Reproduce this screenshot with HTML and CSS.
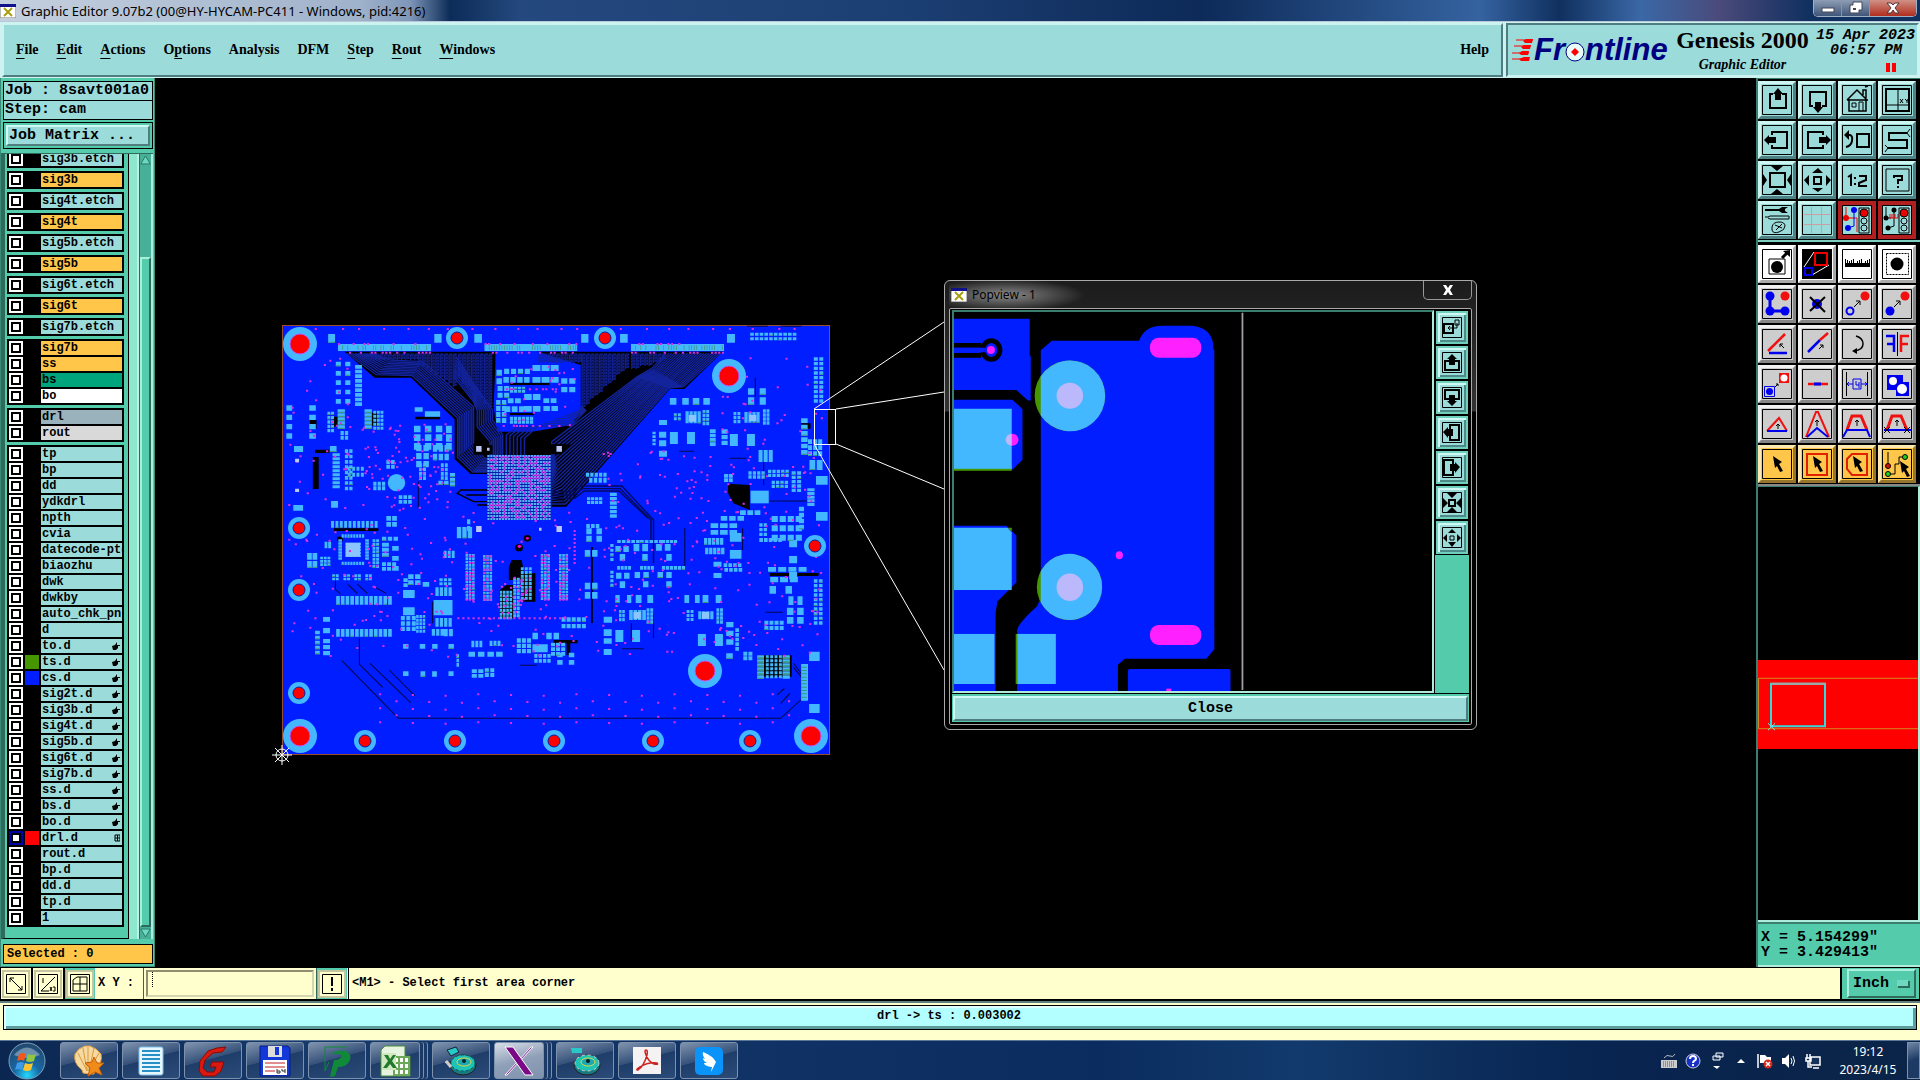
FILE: index.html
```html
<!DOCTYPE html>
<html lang="en">
<head>
  <meta charset="UTF-8">
  <meta name="viewport" content="width=device-width, initial-scale=1.0">
  <title>Graphic Editor 9.07b2</title>
  <link rel="stylesheet" href="styles.css">
</head>
<body>

  <header class="titlebar">
    <svg class="app-icon" viewBox="0 0 16 14"><rect width="16" height="14" fill="#fff" stroke="#777"/><rect width="16" height="3" fill="#11118c"/><path d="M4 4l8 8M12 4l-8 8" stroke="#a8a010" stroke-width="2"/></svg>
    <span class="title-text">Graphic Editor 9.07b2 (00@HY-HYCAM-PC411 - Windows, pid:4216)</span>
    <div class="win-controls">
      <button class="win-btn" aria-label="Minimize"><svg viewBox="0 0 20 16"><rect x="4" y="8" width="12" height="4" fill="#fff" stroke="#445"/></svg></button>
      <button class="win-btn" aria-label="Restore"><svg viewBox="0 0 20 16"><path d="M7 2h9v8h-3v3H4V5h3z" fill="#fff" stroke="#445"/><path d="M7 8h3v2H7z" fill="#445"/></svg></button>
      <button class="win-btn win-close" aria-label="Close window"><svg viewBox="0 0 20 16"><path d="M4 3h4l2 2 2-2h4l-4 5 4 5h-4l-2-3-2 3H4l4-5z" fill="#fff" stroke="#533"/></svg></button>
    </div>
  </header>

  <div class="topbar">
    <nav class="menu">
      <a href="#"><u>F</u>ile</a>
      <a href="#"><u>E</u>dit</a>
      <a href="#"><u>A</u>ctions</a>
      <a href="#">O<u>p</u>tions</a>
      <a href="#">Analysis</a>
      <a href="#">DFM</a>
      <a href="#"><u>S</u>tep</a>
      <a href="#"><u>R</u>out</a>
      <a href="#"><u>W</u>indows</a>
      <a href="#" class="help">Help</a>
    </nav>
    <div class="brand">
      <div class="logo">
        <svg viewBox="0 0 22 26"><path d="M14 2h7l-1 4h-7l-2-2zM12 8h7l-1 4h-7l-2-2zM10 14h7l-1 4H9l-2-2zM12 20h6l-1 4H9l-2-2z" fill="#f00"/><path d="M4 3h17M2 9h17M0 16h17M0 22h17" stroke="#f00"/></svg>
        <span>Fr<svg class="target" viewBox="0 0 20 22"><circle cx="10" cy="11" r="9" fill="#e8fbfb" stroke="#000080"/><path d="M10 7l4 4-4 4-4-4z" fill="#f00"/></svg>ntline</span>
      </div>
      <div class="product">
        <strong>Genesis 2000</strong>
        <em>Graphic Editor</em>
      </div>
      <div class="stamp">
        <span>15 Apr 2023</span>
        <span class="time">06:57 PM</span>
        <i class="pause"></i>
      </div>
    </div>
  </div>

  <main class="main">
    <aside class="left">
      <div class="job-line">Job : 8savt001a0</div>
      <div class="job-line">Step: cam</div>
      <div class="matrix"><button>Job Matrix ...</button></div>
      <div class="layers">
        <div class="layer-list" id="layers"></div>
        <div class="scroll">
          <svg viewBox="0 0 14 12"><path d="M7 1l6 10H1z" fill="#6fd8c0" stroke="#1d6a58"/></svg>
          <div class="trough"></div>
          <div class="thumb"></div>
          <svg viewBox="0 0 14 12"><path d="M7 11l6-10H1z" fill="#6fd8c0" stroke="#1d6a58"/></svg>
        </div>
      </div>
      <div class="selected">Selected : 0</div>
    </aside>

    <section class="workspace">
      <svg class="board" id="board" viewBox="155 78 1601 889" preserveAspectRatio="xMinYMin meet"></svg>

      <div class="popview">
        <div class="pop-title">
          <svg class="app-icon" viewBox="0 0 16 14"><rect width="16" height="14" fill="#fff" stroke="#777"/><rect width="16" height="3" fill="#11118c"/><path d="M4 4l8 8M12 4l-8 8" stroke="#a8a010" stroke-width="2"/></svg>
          <span class="title-text">Popview - 1</span>
          <button class="pop-x" aria-label="Close popview"><svg viewBox="0 0 14 12"><path d="M2 1h3l2 3 2-3h3L9 6l3 5H9L7 8l-2 3H2l3-5z" fill="#fff"/></svg></button>
        </div>
        <div class="pop-body">
          <div class="pop-row">
            <svg class="pop-view" viewBox="69 127 1333 1136" preserveAspectRatio="none">
              <g fill="#001eff">
                <path d="M69 147H280V258H283V392H275L243 361H69z"/>
                <path d="M69 390H232L260 418V570L232 600H69z"/>
                <path d="M69 768H215L243 797V938L190 995L185 1030V1263H69z"/>
                <path d="M311 242L342 213H585Q600 168 650 168H735Q793 175 793 240H795V1138L773 1166H546L526 1184V1263H245V1080Q250 1058 300 1010L311 985z"/>
                <rect x="554" y="1197" width="286" height="70" rx="5"/>
              </g>
              <path d="M69 227H145M69 257H145" stroke="#000" stroke-width="14"/>
              <ellipse cx="173" cy="241" rx="24" ry="28" fill="#001eff" stroke="#000" stroke-width="14"/>
              <path d="M69 241H165" stroke="#001eff" stroke-width="14"/>
              <g fill="#459600">
                <rect x="69" y="590" width="161" height="13"/>
                <path d="M218 774h12v12z"/>
                <rect x="241" y="1092" width="10" height="150"/>
                <ellipse cx="392" cy="378" rx="98" ry="106"/>
                <ellipse cx="391" cy="951" rx="91" ry="99"/>
              </g>
              <g fill="#44b8ff">
                <rect x="69" y="417" width="161" height="180"/>
                <path d="M69 774H218L230 788V960H69z"/>
                <rect x="69" y="1092" width="113" height="150"/>
                <rect x="246" y="1092" width="107" height="150"/>
                <path d="M311 320A98 106 0 1 1 311 437z"/>
                <path d="M311 904A91 99 0 1 1 311 998z"/>
              </g>
              <g fill="#ff20ff">
                <rect x="615" y="204" width="144" height="60" rx="24" ry="30"/>
                <rect x="615" y="1065" width="144" height="60" rx="24" ry="30"/>
                <ellipse cx="172" cy="241" rx="11" ry="12"/>
                <ellipse cx="530" cy="856" rx="10" ry="12"/>
                <ellipse cx="232" cy="510" rx="17" ry="18"/>
                <rect x="661" y="1256" width="14" height="7"/>
              </g>
              <path d="M230 492A17 18 0 0 0 230 528z" fill="#bcb8fc"/>
              <ellipse cx="392" cy="378" rx="37" ry="39" fill="#bcb8fc"/>
              <ellipse cx="392" cy="952" rx="37" ry="41" fill="#bcb8fc"/>
              <path d="M873 129V1260" stroke="#a9a9b5" stroke-width="4"/>
              <path d="M876 129V1260" stroke="#a03c28" stroke-width="2"/>
            </svg>
            <div class="pop-tools">
              <button aria-label="Pick area"><svg viewBox="0 0 20 21"><path d="M.5.5h19v20H.5z"/><path d="M2 7h9v9H2z" stroke-width="2"/><path d="M13 3h4v5h-4zM15 6v5H6m2-2l-2 2 2 2"/></svg></button>
              <button aria-label="Pan up"><svg viewBox="0 0 20 21"><path d="M.5.5h19v20H.5z"/><path d="M7 9H3v9h14V9h-4" stroke-width="2"/><path class="f" d="M10 2l5 5h-2v6H7V7H5z"/></svg></button>
              <button aria-label="Pan down"><svg viewBox="0 0 20 21"><path d="M.5.5h19v20H.5z"/><path d="M7 12H3V3h14v9h-4" stroke-width="2"/><path class="f" d="M10 19l5-5h-2V8H7v6H5z"/></svg></button>
              <button aria-label="Pan left"><svg viewBox="0 0 20 21"><path d="M.5.5h19v20H.5z"/><path d="M8 7V3h9v15H8v-4" stroke-width="2"/><path class="f" d="M1 10l5-5v2h5v7H6v2z"/></svg></button>
              <button aria-label="Pan right"><svg viewBox="0 0 20 21"><path d="M.5.5h19v20H.5z"/><path d="M11 7V3H2v15h9v-4" stroke-width="2"/><path class="f" d="M18 10l-5-5v2H8v7h5v2z"/></svg></button>
              <button aria-label="Zoom in"><svg viewBox="0 0 20 21"><path d="M.5.5h19v20H.5z"/><path d="M7 8h6v6H7z" stroke-width="2"/><path class="f" d="M5 1h10l-5 5zM5 20h10l-5-5zM1 6v10l5-5zM19 6v10l-5-5z"/></svg></button>
              <button aria-label="Zoom out"><svg viewBox="0 0 20 21"><path d="M.5.5h19v20H.5z"/><path d="M8 9h4v4H8z"/><path class="f" d="M6 6h8l-4-4zM6 15h8l-4 5zM5 7v8l-4-4zM15 7v8l4-4z"/></svg></button>
            </div>
          </div>
          <div class="pop-close"><button>Close</button></div>
        </div>
      </div>
    </section>

    <aside class="right">
      <div class="tools tools-view">
        <button class="tool" aria-label="Pan up"><svg viewBox="0 0 30 30"><path class="box" d="M.5.5h29v29H.5z"/><path d="M11 9H8v14h16V9h-4" stroke-width="2"/><path class="f" d="M16 3l5 6h-2v6h-6V9h-2z"/></svg></button>
        <button class="tool" aria-label="Pan down"><svg viewBox="0 0 30 30"><path class="box" d="M.5.5h29v29H.5z"/><path d="M11 21H8V7h16v14h-4" stroke-width="2"/><path class="f" d="M16 28l5-6h-2v-5h-6v5h-2z"/></svg></button>
        <button class="tool" aria-label="Home"><svg viewBox="0 0 30 30"><path class="box" d="M.5.5h29v29H.5z"/><path d="M5 15L15 5l10 10M7 14v12h17V14M5 15h21M21 10V5h3v8M23 2l3-1" stroke-width="1.5"/><path d="M10 18h4v4h-4zM17 26v-9h4v9"/></svg></button>
        <button class="tool" aria-label="Zoom XY"><svg viewBox="0 0 30 30"><path class="box" d="M.5.5h29v29H.5z"/><path d="M4 4h23v22H4z" stroke-width="2"/><path d="M16 4v22M4 20h23M18 14l3 4m0-4l-3 4M23 14l2 2 1-2m-1 2v2"/></svg></button>

        <button class="tool" aria-label="Pan left"><svg viewBox="0 0 30 30"><path class="box" d="M.5.5h29v29H.5z"/><path d="M10 10V7h15v16H10v-3" stroke-width="2"/><path class="f" d="M2 15l5-5v2h7v6H7v2z"/></svg></button>
        <button class="tool" aria-label="Pan right"><svg viewBox="0 0 30 30"><path class="box" d="M.5.5h29v29H.5z"/><path d="M21 10V7H6v16h15v-3" stroke-width="2"/><path class="f" d="M29 15l-5-5v2h-7v6h7v2z"/></svg></button>
        <button class="tool" aria-label="Previous view"><svg viewBox="0 0 30 30"><path class="box" d="M.5.5h29v29H.5z"/><path d="M15 9h12v13H15z" stroke-width="2"/><path d="M5 10h3q3 1 2 6t-6 6" stroke-width="2"/><path class="f" d="M2 10l5-5v10z"/></svg></button>
        <button class="tool" aria-label="Serpent view"><svg viewBox="0 0 30 30"><path class="box" d="M.5.5h29v29H.5z"/><path d="M25 8H7v7h18v8H6" stroke-width="2"/><path d="M28 4l-3 4 3 4M3 20l3 3-3 4"/></svg></button>

        <button class="tool" aria-label="Zoom in"><svg viewBox="0 0 30 30"><path class="box" d="M.5.5h29v29H.5z"/><path d="M8 8h15v14H8z" stroke-width="2"/><path class="f" d="M9 1h12l-6 5zM9 29h12l-6-5zM1 9v12l4-6zM29 9v12l-4-6z"/></svg></button>
        <button class="tool" aria-label="Zoom out"><svg viewBox="0 0 30 30"><path class="box" d="M.5.5h29v29H.5z"/><path d="M12 12h7v7h-7z" stroke-width="2"/><path class="f" d="M10 8h11l-5-5zM10 23h11l-5 4zM7 10v11l-5-6zM24 10v11l5-6z"/></svg></button>
        <button class="tool" aria-label="Scale 1:2"><svg viewBox="0 0 30 30"><path class="box" d="M.5.5h29v29H.5z"/><path d="M6 12l3-2v11M13 12v2m0 4v2M17 11h7v4l-7 3v3h8" stroke-width="2"/></svg></button>
        <button class="tool" aria-label="Help"><svg viewBox="0 0 30 30"><path class="box" d="M.5.5h29v29H.5z"/><path d="M4 4h23v22H4z"/><path d="M12 13v-2h8v4h-4v4m0 2v2" stroke-width="2"/></svg></button>

        <button class="tool" aria-label="Settings"><svg viewBox="0 0 30 30"><path class="box" d="M.5.5h29v29H.5z"/><path class="f" d="M3 4h14l3-2h6l-3 2v2l3 2h-6l-3-2H3z"/><path d="M3 12h3l2-1h19v3H8l-2-1M10 22q1-5 7-5t6 4-6 6-7-2zM13 20l7 3M20 19l-6 6"/></svg></button>
        <button class="tool" aria-label="Grid"><svg viewBox="0 0 30 30"><path class="box" d="M.5.5h29v29H.5z"/><path d="M9.5 2v26M19.5 2v26M2 9.5h26M2 19.5h26" stroke="#c99f9f"/></svg></button>
        <button class="tool tool-red" aria-label="Snap on"><svg viewBox="0 0 30 30"><path class="box" d="M.5.5h29v29H.5z"/><path d="M4 2v11h11v14" stroke="#e00"/><path d="M12 4v17l-6 2" stroke="#00e" stroke-width="1"/><circle cx="4" cy="13" r="3" fill="#e00" stroke="none"/><circle cx="12" cy="5" r="3" fill="#00e" stroke="none"/><circle cx="6" cy="23" r="3" fill="#00e" stroke="none"/><path d="M17 3h10v25H17z"/><circle cx="22" cy="8" r="4" fill="#e00"/><circle cx="22" cy="16" r="3"/><circle cx="22" cy="23" r="3"/></svg></button>
        <button class="tool tool-red" aria-label="Snap off"><svg viewBox="0 0 30 30"><path class="box" d="M.5.5h29v29H.5z"/><path d="M4 2v11h5M12 4v17l-6 2"/><path d="M8 9v4h8M10 9v4m3-4v4m3-4v4" stroke="#e00"/><circle class="f" cx="4" cy="13" r="2.5"/><circle class="f" cx="12" cy="5" r="2.5"/><circle class="f" cx="6" cy="23" r="2.5"/><path d="M17 3h10v25H17z"/><circle cx="22" cy="8" r="4" fill="#e00"/><circle cx="22" cy="16" r="3"/><circle cx="22" cy="23" r="3"/></svg></button>
      </div>

      <div class="tools tools-edit">
        <button class="tool tool-white" aria-label="Feature info"><svg viewBox="0 0 30 30"><path class="box" d="M.5.5h29v29H.5z"/><path d="M7 10h16v15H7z"/><circle class="f" cx="15" cy="18" r="6"/><path d="M20 9l5-5" stroke-width="3"/><path class="f" d="M21 2l7-1v7z"/></svg></button>
        <button class="tool tool-white" aria-label="Popview"><svg viewBox="0 0 30 30"><path class="f" d="M0 0h30v30H0z"/><path d="M2 18L12 3M10 26l17-10" stroke="#fff"/><path d="M13 4h12v12H13z" stroke="#e00" stroke-width="2"/><path d="M3 19h7v7H3z" stroke="#00e" stroke-width="2"/></svg></button>
        <button class="tool tool-white" aria-label="Measure"><svg viewBox="0 0 30 30"><path class="box" d="M.5.5h29v29H.5z"/><path class="f" d="M3 14h25v4H3z"/><path d="M3.5 10v4m4-2v2m4-4v4m4-2v2m4-4v4m4-2v2m4-4v4M5.5 11v3m4-3v3m8-3v3m8-3v3"/></svg></button>
        <button class="tool tool-white" aria-label="Select area"><svg viewBox="0 0 30 30"><path class="box" d="M.5.5h29v29H.5z"/><path d="M4.5 4.5h22v21h-22z" stroke-dasharray="2 1"/><circle class="f" cx="15" cy="15" r="6.5"/></svg></button>

        <button class="tool" aria-label="Add chain"><svg viewBox="0 0 30 30"><path class="box" d="M.5.5h29v29H.5z"/><path d="M8 7v15h14" stroke="#00e" stroke-width="3"/><g stroke="none"><circle cx="8" cy="7" r="4.5" fill="#00e"/><circle cx="8" cy="22" r="4.5" fill="#00e"/><circle cx="23" cy="22" r="4.5" fill="#00e"/><circle cx="23" cy="7" r="4.5" fill="#f01010"/></g></svg></button>
        <button class="tool" aria-label="Delete"><svg viewBox="0 0 30 30"><path class="box" d="M.5.5h29v29H.5z"/><circle cx="15" cy="15" r="5" fill="#00e" stroke="none"/><path d="M8 8l15 15M23 8L8 22" stroke-width="2"/></svg></button>
        <button class="tool" aria-label="Move pad"><svg viewBox="0 0 30 30"><path class="box" d="M.5.5h29v29H.5z"/><circle cx="8" cy="22" r="3.5" stroke="#00e" stroke-width="2"/><circle cx="23" cy="7" r="4.5" fill="#f01010" stroke="none"/><path d="M12 18l6-6m-4 0h4v4"/></svg></button>
        <button class="tool" aria-label="Copy pad"><svg viewBox="0 0 30 30"><path class="box" d="M.5.5h29v29H.5z"/><circle cx="8" cy="22" r="4.5" fill="#00e" stroke="none"/><circle cx="23" cy="7" r="4.5" fill="#f01010" stroke="none"/><path d="M12 18l6-6m-4 0h4v4"/></svg></button>

        <button class="tool" aria-label="Rotate line"><svg viewBox="0 0 30 30"><path class="box" d="M.5.5h29v29H.5z"/><path d="M6 22L23 5" stroke="#f01010" stroke-width="2.5"/><path d="M7 24h18" stroke="#00e" stroke-width="2.5"/><path d="M22 19l-4-4m0 3v-3h3"/></svg></button>
        <button class="tool" aria-label="Stretch line"><svg viewBox="0 0 30 30"><path class="box" d="M.5.5h29v29H.5z"/><path d="M18 11l8-7" stroke="#f01010" stroke-width="2.5"/><path d="M6 23l12-12" stroke="#00e" stroke-width="2.5"/><path d="M17 20l4-4m-3 0h3v3"/></svg></button>
        <button class="tool" aria-label="Rotate"><svg viewBox="0 0 30 30"><path class="box" d="M.5.5h29v29H.5z"/><path d="M14 7q7 2 7 8t-9 7" stroke-width="1.5"/><path class="f" d="M10 22l5-3v6z"/></svg></button>
        <button class="tool" aria-label="Mirror"><svg viewBox="0 0 30 30"><path class="box" d="M.5.5h29v29H.5z"/><path d="M4 7h8v16M12 15H5" stroke="#00e" stroke-width="2.5"/><path d="M27 7h-8v16M19 15h7" stroke="#f01010" stroke-width="2.5"/><path d="M15.5 3v24"/></svg></button>

        <button class="tool" aria-label="Change symbol"><svg viewBox="0 0 30 30"><path class="box" d="M.5.5h29v29H.5z"/><path d="M17 4h10v10H17z" fill="#f01010" stroke="none"/><circle cx="22" cy="9" r="3.5" fill="#fff" stroke="none"/><path d="M2.5 17.5h10v10h-10z" stroke="#00e"/><circle cx="7.5" cy="22.5" r="3.5" fill="#00e" stroke="none"/><path d="M13 18l3-3m-2 0h2v2"/></svg></button>
        <button class="tool" aria-label="Merge line"><svg viewBox="0 0 30 30"><path class="box" d="M.5.5h29v29H.5z"/><path d="M6 15h20" stroke="#f01010" stroke-width="2.5"/><path d="M12 15h7" stroke="#00e" stroke-width="3"/></svg></button>
        <button class="tool" aria-label="Spacing"><svg viewBox="0 0 30 30"><path class="box" d="M.5.5h29v29H.5z"/><path d="M4.5 3v24M25.5 3v24"/><path d="M5 15h6m-4-2l-2 2 2 2M25 15h-6m4-2l2 2-2 2M11 10h8v10h-8zM14 12v4h3m0-3v6" stroke="#00e"/></svg></button>
        <button class="tool" aria-label="Contour"><svg viewBox="0 0 30 30"><path class="box" d="M.5.5h29v29H.5z"/><path d="M5 6h16v7h6v14H14v-6H5z" fill="#00e" stroke="none"/><circle cx="11" cy="12" r="4" fill="#fff" stroke="none"/><circle cx="20" cy="20" r="5" fill="#fff" stroke="none"/></svg></button>

        <button class="tool" aria-label="Move triangle"><svg viewBox="0 0 30 30"><path class="box" d="M.5.5h29v29H.5z"/><path d="M5 22l12-13 8 13" stroke="#f01010" stroke-width="2"/><path d="M5 22h20" stroke="#00e" stroke-width="2"/><path d="M16 20v-5m-2 2l2-2 2 2"/></svg></button>
        <button class="tool" aria-label="Move vertex"><svg viewBox="0 0 30 30"><path class="box" d="M.5.5h29v29H.5z"/><path d="M4 28L14 3h2l11 25" stroke="#f01010" stroke-width="2"/><path d="M5 28l10-9 11 9" stroke="#00e" stroke-width="2"/><path d="M15 17v-6m-2 2l2-2 2 2"/></svg></button>
        <button class="tool" aria-label="Move edge"><svg viewBox="0 0 30 30"><path class="box" d="M.5.5h29v29H.5z"/><path d="M5 21l5-14h9l6 14" stroke="#f01010" stroke-width="3"/><path d="M1 28l4-7h20l3 7" stroke="#00e" stroke-width="2"/><path d="M15 17v-6m-2 2l2-2 2 2"/></svg></button>
        <button class="tool" aria-label="Cut edge"><svg viewBox="0 0 30 30"><path class="box" d="M.5.5h29v29H.5z"/><path d="M5 21l5-14h9l6 14" stroke="#f01010" stroke-width="3"/><path d="M2 21h27" stroke="#00e" stroke-width="2"/><path d="M15 17v-6m-2 2l2-2 2 2M2 18l6 6m0-6l-6 6M22 18l6 6m0-6l-6 6"/></svg></button>

        <button class="tool tool-amber" aria-label="Select"><svg viewBox="0 0 30 30"><path class="box" d="M.5.5h29v29H.5z"/><path class="f" d="M11 7l9 6-3 2 4 7-3 1-3-6-2 2z"/></svg></button>
        <button class="tool tool-amber" aria-label="Select frame"><svg viewBox="0 0 30 30"><path class="box" d="M.5.5h29v29H.5z"/><path d="M5 5h20v21H5z" stroke="#e22000" stroke-width="2"/><path class="f" d="M11 7l9 6-3 2 4 7-3 1-3-6-2 2z"/></svg></button>
        <button class="tool tool-amber" aria-label="Select polygon"><svg viewBox="0 0 30 30"><path class="box" d="M.5.5h29v29H.5z"/><path d="M10 5h15v21H10l-5-6V10z" stroke="#e22000" stroke-width="2"/><path class="f" d="M11 7l9 6-3 2 4 7-3 1-3-6-2 2z"/></svg></button>
        <button class="tool tool-amber" aria-label="Select net"><svg viewBox="0 0 30 30"><path class="box" d="M.5.5h29v29H.5z"/><path d="M6 3v15M6 25h7V15h4V8h6"/><circle cx="6" cy="17" r="2.5" fill="#d01010"/><circle cx="6" cy="25" r="2.5" fill="#20d020"/><circle cx="23" cy="8" r="2.5" fill="#20d020"/><path class="f" d="M18 12l9 6-3 2 4 7-3 1-3-6-2 2z"/></svg></button>
      </div>

      <div class="overview">
        <div class="panel-area"><svg viewBox="0 0 160 90" preserveAspectRatio="none"><path d="M160 18.5H.5v51H160" stroke="#cf8a20" fill="none"/><path d="M13 24h54v43H13z" stroke="#30dcdc" stroke-width="2" fill="none"/><path d="M14 24h53" stroke="#a8a8a8" stroke-width="2"/><path d="M10 64l7 7m0-7l-7 7" stroke="#7ee"/></svg></div>
      </div>
      <div class="coords">X = 5.154299"<br>Y = 3.429413"</div>
    </aside>
  </main>

  <div class="command">
    <button class="cmd-btn" aria-label="Absolute mode"><svg viewBox="0 0 20 20"><path d="M.5.5h19v19H.5zM4 4l12 12M4 8V4h4M16 12v4h-4"/></svg></button>
    <button class="cmd-btn" aria-label="Angle mode"><svg viewBox="0 0 20 20"><path d="M.5.5h19v19H.5zM3 17L17 3M3 17h8M5 4v5M12 13l2 4m0-4l-2 4M15 13h2v4h-2"/></svg></button>
    <button class="cmd-btn on" aria-label="Grid mode"><svg viewBox="0 0 20 20"><path d="M.5.5h19v19H.5zM3 6l4-3h10v14H3zM3 10h14M10 3v14"/></svg></button>
    <label class="xy-label" for="xy">X Y :</label>
    <div class="xy-wrap"><input id="xy" type="text"></div>
    <button class="cmd-btn on" aria-label="Alert"><svg viewBox="0 0 20 20"><path d="M.5.5h19v19H.5z"/><path d="M10 3v9m0 2v3" stroke-width="2"/></svg></button>
    <div class="message">&lt;M1&gt; - Select first area corner</div>
    <div class="units">
      <select aria-label="Units"><option>Inch</option><option>MM</option></select>
    </div>
  </div>

  <div class="status"><div>drl -&gt; ts : 0.003002</div></div>

  <footer class="taskbar">
    <button class="orb" aria-label="Start"><svg viewBox="0 0 38 38"><defs><radialGradient id="g" cx=".5" cy=".9" r=".9"><stop offset="0" stop-color="#25d8ff"/><stop offset=".4" stop-color="#1767a4"/><stop offset="1" stop-color="#24476b"/></radialGradient></defs><circle cx="19" cy="19" r="18" fill="url(#g)" stroke="#7aa3bd"/><path d="M6 13Q19-2 32 13q-13 6-26 0" fill="#fff" opacity=".35"/><path d="M11 12q4-2 7 0l-2 7q-3-2-7 0z" fill="#f0581e"/><path d="M20 12q4 2 8 0l-2 7q-4 2-8 0z" fill="#8fc73e"/><path d="M9 21q4-2 7 0l-2 7q-3-2-7 0z" fill="#3f9be8"/><path d="M17 21q4 2 8 0l-2 7q-4 2-8 0z" fill="#fcc530"/></svg></button>

    <button class="task" aria-label="Shell"><svg viewBox="0 0 32 32"><path d="M16 29l-6-1-1-3Q0 18 2 9l4-5 6-3 5 0 6 3 5 5q2 9-6 16l-1 4z" fill="#f6d9a0" stroke="#e0a040"/><path d="M14 26L5 8m9 18L10 3m5 23V2m1 24l5-23m-5 23L26 8" stroke="#d99a3d" fill="none"/><path d="M21 12l3 6 7 0-5 5 3 7-7-3-7 4 2-8-5-5 7-1z" fill="#f08a18" stroke="#c05d0c"/></svg></button>
    <button class="task" aria-label="Notes"><svg viewBox="0 0 32 32"><rect x="4" y="2" width="24" height="28" rx="2" fill="#e8f7ff" stroke="#7cc0e6"/><path d="M7 6h18M7 10h18M7 14h18M7 18h18M7 22h18M7 26h18" stroke="#2790c8" stroke-width="2"/></svg></button>
    <button class="task" aria-label="G"><svg viewBox="0 0 32 32"><path d="M29 2l-4 5-9 1-8 7-2 8 4 4h7l2-5h-6l2-5h12l-3 9-6 5H6l-4-5 1-10 8-10 9-3z" fill="#d91a10" stroke="#8a0a06"/></svg></button>
    <button class="task" aria-label="Save"><svg viewBox="0 0 32 32"><path d="M1 1h28l2 2v28H1z" fill="#1238d8" stroke="#0a1c80"/><rect x="9" y="1" width="14" height="11" fill="#ddd"/><rect x="16" y="2" width="4" height="8" fill="#1238d8"/><rect x="4" y="15" width="24" height="15" fill="#fff"/><path d="M6 18h20M6 22h20M6 26h10" stroke="#c02020"/><path d="M18 24v4h3v-2h-3M23 24v2h3m0-2v4" stroke="#333" fill="none"/></svg></button>
    <button class="task" aria-label="P"><svg viewBox="0 0 32 32"><path d="M4 26V2h22M4 26l4-9" stroke="#108a38" fill="none"/><path d="M9 9q8-5 16-3 7 4 3 11-3 5-11 5l-3 9-5 1 4-17q7 0 8-5-5-2-12-1z" fill="#108a38"/></svg></button>
    <button class="task stack" aria-label="Excel"><svg viewBox="0 0 32 32"><path d="M6 1h20v10h5v20H2V5z" fill="#e6f3de" stroke="#4d8a3c"/><path d="M15 12h15v18H15zM15 18h15M15 24h15M20 12v18M25 12v18" fill="#fff" stroke="#6ba858" stroke-width="2"/><path d="M3 8h14v17H3z" fill="#cfe8c0"/><path d="M5 10h4l2 4 3-4h3l-4 6 5 7h-4l-3-4-3 4H4l5-7z" fill="#217a2c"/></svg></button>
    <button class="task" aria-label="CAM viewer"><svg viewBox="0 0 32 32"><ellipse cx="18" cy="20" rx="13" ry="10" fill="#187a80" stroke="#222"/><ellipse cx="18" cy="18" rx="12" ry="8" fill="#20c4b4" stroke="#0d5a64" stroke-dasharray="3 2"/><ellipse cx="19" cy="17" rx="7" ry="4" fill="#20a8b0" stroke="#dcd84c"/><circle cx="19" cy="16" r="2" fill="#022"/><path d="M2 5l9-3 3 5-8 4z" fill="#28c8c8" stroke="#123"/><path d="M1 16l5 6" stroke="#ccc" stroke-width="3"/></svg></button>
    <button class="task stack active" aria-label="X server"><svg viewBox="0 0 32 32"><path d="M28 2h2L4 30H2z" fill="#7a0a86" stroke="#fff"/><path d="M2 2h8l20 28h-8z" fill="#7a0a86" stroke="#fff"/></svg></button>
    <button class="task" aria-label="CAM viewer 2"><svg viewBox="0 0 32 32"><ellipse cx="18" cy="20" rx="13" ry="10" fill="#187a80" stroke="#222"/><ellipse cx="18" cy="18" rx="12" ry="8" fill="#20c4b4" stroke="#ccc" stroke-dasharray="3 3"/><ellipse cx="19" cy="17" rx="7" ry="4" fill="#20a8b0" stroke="#dcd84c"/><circle cx="19" cy="16" r="2" fill="#022"/><path d="M2 3h11v5H3z" fill="#28c8c8"/></svg></button>
    <button class="task" aria-label="PDF reader"><svg viewBox="0 0 32 32"><rect x="2" y="2" width="28" height="27" fill="#f4f2f2"/><path d="M15 5q2 0 1 5-3 11-9 15-3 0 2-3 8-5 17-4 2 2-3 1-6-3-8-9-2-5 0-5z" fill="none" stroke="#c22" stroke-width="1.5"/></svg></button>
    <button class="task" aria-label="DingTalk"><svg viewBox="0 0 32 32"><rect x="2" y="2" width="28" height="28" rx="5" fill="#0a93f8"/><path d="M10 7q10 4 13 10l-5 10 1-5q-8-1-8-4l3 0q-4-2-4-5l2 1q-3-4-2-7z" fill="#fff"/></svg></button>

    <div class="tray">
      <svg viewBox="0 0 16 16"><path d="M3 5q3-4 6-2t5-2" stroke="#bbb" fill="none"/><rect x="0" y="7" width="16" height="8" fill="#ccc"/><path d="M2 9h12M2 11h12M2 13h12" stroke="#555" stroke-dasharray="1 1"/></svg>
      <svg viewBox="0 0 16 16"><circle cx="8" cy="8" r="7" fill="#1531c8" stroke="#ccd"/><path d="M5 6q0-3 3-3t3 3q0 1-2 2-1 1-1 2m0 1v2" stroke="#fff" stroke-width="2" fill="none"/></svg>
      <svg viewBox="0 0 16 20"><path d="M7 2h7v4H7zM4 5h7v4H4z" fill="#153462" stroke="#fff"/><path d="M4 15h7l-3 3z" fill="#fff"/></svg>
      <svg viewBox="0 0 16 16"><path d="M4 10h8L8 6z" fill="#fff"/></svg>
      <svg viewBox="0 0 16 16"><path d="M1 1v14" stroke="#fff" stroke-width="1.5"/><path d="M3 2h5l2 2h4v6H3z" fill="#fff"/><circle cx="11" cy="11" r="4.5" fill="#d8281c"/><path d="M9 9l4 4m0-4l-4 4" stroke="#fff" stroke-width="1.5"/></svg>
      <svg viewBox="0 0 16 16"><path d="M1 5h3l4-4v14l-4-4H1z" fill="#fff"/><path d="M10 5q2 3 0 6m2-8q3 5 0 10" stroke="#fff" fill="none"/></svg>
      <svg viewBox="0 0 16 16"><path d="M5 4h10v8H5zM8 15h6M2 1v4m3-4v4M1 5h5v3H1zM3 8v6h4" stroke="#fff" fill="#163158" stroke-width="1.5"/></svg>
      <div class="clock">19:12<br>2023/4/15</div>
      <button class="show-desktop" aria-label="Show desktop"></button>
    </div>
  </footer>

  <script src="script.js"></script>
</body>
</html>
```
FILE: styles.css
```css
* {
  box-sizing: border-box;
}
body {
  margin: 0;
  height: 100vh;
  display: flex;
  flex-direction: column;
  background: #000;
  color: #000;
  font-family: "Liberation Mono", monospace;
  font-weight: bold;
  font-size: 12px;
  overflow: hidden;
}
button, input, select {
  font: inherit;
  color: inherit;
  margin: 0;
  padding: 0;
}
a {
  color: inherit;
  text-decoration: none;
}
svg {
  display: block;
}

/* window title */
.titlebar {
  height: 22px;
  flex: none;
  display: flex;
  align-items: center;
  background: linear-gradient(90deg, #c5d0de 0, #9fb2cb 360px, #7e96b8 410px, #0c2c58 450px, #24497e 520px, #1c3f73 900px, #0d2a58 1200px, #3563a0 1480px, #10305f 1560px, #3a68a6 1640px, #4a4a7a 1720px, #10305f 1810px);
  border-bottom: 1px solid #b8c8d8;
}
.app-icon {
  width: 16px;
  height: 14px;
  margin-right: 5px;
}
.title-text {
  font: 12px "Noto Sans", sans-serif;
}
.titlebar .title-text {
  font-size: 13px;
}
.win-controls {
  margin: 0 3px 4px auto;
  align-self: stretch;
  display: flex;
  border: 1px solid #9fb0c4;
  border-top: 0;
  border-radius: 0 0 5px 5px;
  overflow: hidden;
}
.win-btn {
  width: 28px;
  border: 0;
  border-right: 1px solid #8494aa;
  background: linear-gradient(#8e9db4, #3f5679);
  display: flex;
  justify-content: center;
  align-items: center;
}
.win-btn svg {
  width: 20px;
  height: 16px;
}
.win-close {
  width: 46px;
  border-right: 0;
  background: linear-gradient(#d09086, #b02d1e);
}

/* menu bar and brand */
.topbar {
  height: 56px;
  flex: none;
  display: flex;
  background: #cdf3f0;
  font-family: "Liberation Serif", serif;
}
.menu, .brand {
  background: #9bdcdb;
  border: 2px solid;
  border-color: #cdf3f0 #4f7d80 #4f7d80 #cdf3f0;
  margin: 1px 1px 1px 2px;
  display: flex;
  align-items: center;
}
.menu {
  flex: 1;
  gap: 18px;
  padding: 0 12px;
  font-size: 14px;
}
.menu u {
  text-underline-offset: 4px;
}
.help {
  margin-left: auto;
}
.brand {
  width: 413px;
  border-color: #4f7d80 #cdf3f0 #cdf3f0 #4f7d80;
  padding: 0 2px 0 4px;
}
.logo {
  display: flex;
  align-items: center;
  width: 162px;
  font: italic bold 31px/34px "Liberation Sans", sans-serif;
  color: #000080;
}
.logo svg {
  width: 22px;
  height: 26px;
  flex: none;
}
.logo .target {
  display: inline-block;
  width: 20px;
  height: 22px;
  vertical-align: middle;
}
.product {
  display: flex;
  flex-direction: column;
  align-items: center;
  width: 137px;
}
.product strong {
  font-size: 24px;
  line-height: 30px;
  white-space: nowrap;
}
.product em {
  font-size: 14px;
  line-height: 20px;
}
.stamp {
  flex: 1;
  display: flex;
  flex-direction: column;
  align-items: flex-end;
  font: italic bold 15px/15px "Liberation Mono", monospace;
}
.time {
  padding-right: 13px;
}
.pause {
  width: 10px;
  height: 9px;
  margin: 5px 19px 0 0;
  border: solid #f00;
  border-width: 0 4px;
}

.main {
  flex: 1;
  min-height: 0;
  display: flex;
}

/* layer panel */
.left {
  width: 155px;
  display: flex;
  flex-direction: column;
  padding: 3px 1px 2px 2px;
  background: #54ccac;
  border: 1px solid #3a8b78;
  border-top: 0;
}
.job-line {
  height: 20px;
  margin-bottom: -1px;
  border: 1px solid #000;
  background: #9bdcdb;
  font-size: 15px;
  line-height: 18px;
  padding-left: 1px;
  white-space: nowrap;
  overflow: hidden;
}
.matrix {
  margin-top: 3px;
  border: 1px solid #000;
  padding: 2px;
}
.matrix button {
  width: 100%;
  height: 21px;
  text-align: left;
  padding-left: 1px;
  font-size: 15px;
  line-height: 16px;
}
.matrix button, .pop-close button {
  background: #9bdcdb;
  border: 2px solid;
  border-color: #d0f8f4 #4f7d80 #4f7d80 #d0f8f4;
}
.layers {
  flex: 1;
  min-height: 0;
  margin: 4px 0 5px -2px;
  display: flex;
  justify-content: space-between;
  border-top: 1px solid #2f6b5d;
}
.layer-list {
  width: 128px;
  display: flex;
  flex-direction: column;
  justify-content: flex-end;
  gap: 3px;
  overflow: hidden;
  padding: 0 3px 11px 2px;
  border-left: 4px solid #2f6b5d;
  border-right: 1px solid #000;
  border-bottom: 1px solid #000;
}
.layers::before {
  content: "";
  order: 1;
  width: 8px;
  background: #8fe6cf;
  border-right: 2px solid #b8f3e4;
}
.scroll {
  order: 2;
  width: 14px;
  display: flex;
  flex-direction: column;
  background: #48b098;
  border-left: 1px solid #2f6b5d;
  border-right: 2px solid #a8efdc;
}
.scroll svg {
  height: 12px;
}
.trough {
  flex: 12;
}
.thumb {
  flex: 88;
  background: #54ccac;
  border: 2px solid;
  border-color: #a8efdc #2f6b5d #2f6b5d #a8efdc;
}
.group {
  flex: none;
  background: #000;
  padding: 1px 0;
  width: 117px;
}
.layer {
  height: 16px;
  display: flex;
  align-items: center;
  padding-left: 2px;
}
.layer input {
  appearance: none;
  width: 14px;
  height: 14px;
  background: #fff;
  border: 2px solid #fff;
  box-shadow: inset 0 0 0 2px #000;
}
.layer input:checked {
  border-color: #0000a8;
}
.layer .swatch {
  width: 14px;
  height: 14px;
  margin: 0 2px;
}
.layer label {
  flex: 1;
  min-width: 0;
  height: 14px;
  margin-right: 2px;
  padding-left: 1px;
  background: #9bdcdb;
  line-height: 13px;
  white-space: nowrap;
  overflow: hidden;
  display: flex;
  justify-content: space-between;
  align-items: center;
}
.layer label svg {
  width: 8px;
  height: 8px;
  margin-right: 2px;
}
.layer .sig {
  background: #ffc64a;
}
.layer .mask {
  background: #00a47c;
}
.layer .silk {
  background: #fff;
}
.layer .drill {
  background: #9ab2bc;
}
.layer .rout {
  background: #d9d9d9;
}
.selected {
  height: 20px;
  border: 1px solid #000;
  background: #ffc64a;
  line-height: 18px;
  padding-left: 3px;
}

/* canvas */
.workspace {
  flex: 1;
  min-width: 0;
  position: relative;
  background: #000;
}
.board {
  width: 100%;
  height: 100%;
}

/* floating popview window */
.popview {
  position: absolute;
  left: 789px;
  top: 202px;
  width: 533px;
  height: 450px;
  display: flex;
  flex-direction: column;
  border: 1px solid #aaa;
  border-radius: 6px;
  background: linear-gradient(#1c1c1c, #333 130px, #000 131px);
  padding: 0 4px 4px;
}
.pop-title {
  height: 27px;
  display: flex;
  align-items: center;
  padding-left: 2px;
  background: radial-gradient(ellipse 80px 16px at 56px 14px, #8a8a8a, transparent);
}
.pop-x {
  width: 49px;
  height: 19px;
  margin-left: auto;
  align-self: flex-start;
  background: transparent;
  border: 1px solid #999;
  border-top: 0;
  border-radius: 0 0 5px 5px;
  display: flex;
  justify-content: center;
  align-items: center;
}
.pop-x svg {
  width: 14px;
  height: 12px;
}
.pop-body {
  flex: 1;
  min-height: 0;
  display: flex;
  flex-direction: column;
  border: 1px solid #aaa;
  border-radius: 2px;
  padding: 1px 2px 2px;
  background: #000;
}
.pop-row {
  flex: 1;
  min-height: 0;
  display: flex;
}
.pop-view {
  flex: 1;
  min-width: 0;
  height: 100%;
  border: 2px solid;
  border-color: #3a7e6f #b0ecdc #b0ecdc #3a7e6f;
}
.pop-tools {
  width: 34px;
  margin-left: 1px;
  background: #54ccac;
  display: flex;
  flex-direction: column;
}
.pop-tools button {
  height: 35px;
  flex: none;
  padding: 1px;
  background: #9bdcdb;
  border: 1px solid #000;
  box-shadow: inset 0 0 0 2px #6fcfbd, inset 4px 4px #d0f8f4, inset -4px -4px #4f8a88;
  display: flex;
  justify-content: center;
  align-items: center;
}
.pop-tools svg {
  width: 20px;
  height: 21px;
}
.pop-close {
  padding: 2px 1px 1px;
  margin-top: 1px;
  background: #54ccac;
}
.pop-close button {
  display: block;
  width: 100%;
  height: 25px;
  font-size: 15px;
}

/* tool palette */
.right {
  width: 164px;
  display: flex;
  flex-direction: column;
  border-left: 2px solid #3a7e6f;
}
.tools {
  display: grid;
  grid-template-columns: repeat(4, 38px);
  grid-auto-rows: 38px;
  gap: 2px;
  padding: 2px 0 1px;
  border-top: 1px solid #3a7e6f;
}
.tools-edit {
  padding-top: 3px;
  border-top: 2px solid #7ecfc0;
  border-bottom: 2px solid #888;
}
.tool {
  background: #9bdcdb;
  border: 3px solid;
  border-color: #cdf5f2 #4f8285 #4f8285 #cdf5f2;
  display: flex;
  justify-content: center;
  align-items: center;
}
.tools-edit .tool {
  background: #cdcdcd;
  border-color: #f2f2f2 #868686 #868686 #f2f2f2;
}
.tools .tool-red {
  border-color: #b02020;
  background: #b02020;
}
.tool-red .box {
  fill: #9bdcdb;
}
.tools-edit .tool-white {
  background: #fff;
  border-color: #fff #aaa #aaa #fff;
}
.tools-edit .tool-amber {
  background: #ffc64a;
  border-color: #ffe9b0 #96752c #96752c #ffe9b0;
}
.tool svg {
  width: 30px;
  height: 30px;
  flex: none;
}
.tool svg, .pop-tools svg, .cmd-btn svg {
  fill: none;
  stroke: #000;
}
.tool .f, .pop-tools .f {
  fill: #000;
  stroke: none;
}
.overview {
  flex: 1;
  border: 1px solid #3a7e6f;
  border-left: 0;
  border-right: 2px solid #b0ecdc;
  border-bottom: 2px solid #b0ecdc;
  padding-top: 173px;
}
.panel-area {
  height: 89px;
  background: #f00;
}
.panel-area svg {
  width: 100%;
  height: 100%;
}
.coords {
  height: 45px;
  background: #54ccac;
  border-top: 2px solid #3a7e6f;
  border-bottom: 2px solid #b0ecdc;
  padding: 6px 3px 0;
  font-size: 15px;
  line-height: 15px;
}

/* command line */
.command {
  height: 34px;
  flex: none;
  display: flex;
  background: #ffffce;
  border: solid #000;
  border-width: 1px 0 2px 1px;
}
.cmd-btn {
  width: 32px;
  background: #ffffce;
  border: 1px solid #000;
  border-width: 0 2px 0 0;
  display: flex;
  justify-content: center;
  align-items: center;
}
.cmd-btn svg {
  width: 20px;
  height: 20px;
  box-shadow: 0 0 0 2px #ffffce, 0 0 0 4px #c5c5a0;
}
.cmd-btn.on {
  width: 30px;
  background: #54ccac;
  border: 0;
}
.cmd-btn.on svg {
  background: #ffffce;
}
.xy-label {
  width: 48px;
  padding-left: 3px;
  line-height: 31px;
}
.xy-wrap {
  width: 174px;
  padding: 2px;
  border: solid #2f6b5d;
  border-width: 0 1px;
}
.xy-wrap input {
  width: 100%;
  height: 100%;
  background: repeating-linear-gradient(#000 0 1px, transparent 1px 2px) 4px 0 / 1px 15px no-repeat, #ffffce;
  border: 2px solid;
  border-color: #8f8f70 #d6d6b0 #d6d6b0 #8f8f70;
}
.message {
  flex: 1;
  margin-left: 1px;
  padding-left: 3px;
  border-left: 1px solid #000;
  line-height: 31px;
}
.units {
  width: 80px;
  padding: 1px 4px 1px 5px;
  background: #54ccac;
  border: solid #000;
  border-width: 0 1px 0 2px;
}
.units select {
  appearance: none;
  width: 69px;
  height: 29px;
  padding-left: 4px;
  font-size: 15px;
  border: 2px solid;
  border-color: #a8efdc #2f6b5d #2f6b5d #a8efdc;
  border-radius: 0;
  background: linear-gradient(#6fd8c0, #6fd8c0) 48px 9px / 11px 6px no-repeat, linear-gradient(#2f6b5d, #2f6b5d) 49px 10px / 12px 7px no-repeat, #54ccac;
}
.status {
  height: 39px;
  flex: none;
  padding: 2px 3px 10px;
  background: #ffffce;
  border-top: 2px solid #5e8080;
}
.status div {
  height: 25px;
  line-height: 21px;
  text-align: center;
  padding-right: 22px;
  background: #b3ffff;
  border: 1px solid #000;
  box-shadow: inset 2px 2px #e0ffff, inset -3px -3px #5f9c9c;
}

/* taskbar */
.taskbar {
  height: 40px;
  flex: none;
  display: flex;
  align-items: stretch;
  gap: 4px;
  padding: 1px 0;
  background: linear-gradient(90deg, #0b2650, #16396c 300px, #0b2c5e 1100px, #123a6c 1300px, #082450 1600px, #0b2448);
  border-top: 1px solid #5c7896;
}
.orb {
  width: 56px;
  padding-left: 8px;
  border: 0;
  background: transparent;
}
.orb svg {
  width: 38px;
  height: 38px;
}
.task {
  width: 58px;
  background: linear-gradient(165deg, #7f93ad, #35517a 45%, #1f3d69 46%, #2b4b78);
  border: 1px solid #7d91ab;
  border-radius: 3px;
  display: flex;
  justify-content: center;
  align-items: center;
}
.task svg {
  width: 32px;
  height: 32px;
}
.stack {
  width: 50px;
  margin-right: 8px;
  box-shadow: 3px 0 #1c3a66, 4px 0 #7d91ab, 7px 0 #1c3a66, 8px 0 #7d91ab;
}
.active {
  background: linear-gradient(165deg, #d8dee8, #8fa0b8 50%, #7f92ae);
}
.tray {
  margin-left: auto;
  display: flex;
  align-items: center;
  gap: 8px;
}
.tray svg {
  width: 16px;
}
.clock {
  width: 62px;
  margin-left: 8px;
  font: 12px/18px "Noto Sans", sans-serif;
  color: #fff;
  text-align: center;
}
.show-desktop {
  width: 13px;
  align-self: stretch;
  border: 1px solid #7d91ab;
  background: linear-gradient(160deg, #6f86a4, #1d3a64 50%);
}
```
FILE: script.js
```js
// ---- layer list ----
// name|class|colour|mark, one array per group
const groups = [
  ['sig3b.etch'],
  ['sig3b|sig'],
  ['sig4t.etch'],
  ['sig4t|sig'],
  ['sig5b.etch'],
  ['sig5b|sig'],
  ['sig6t.etch'],
  ['sig6t|sig'],
  ['sig7b.etch'],
  ['sig7b|sig', 'ss|sig', 'bs|mask', 'bo|silk'],
  ['drl|drill', 'rout|rout'],
  ['tp', 'bp', 'dd', 'ydkdrl', 'npth', 'cvia', 'datecode-pte', 'biaozhu', 'dwk', 'dwkby', 'auto_chk_pnl', 'd',
   'to.d|||h', 'ts.d||#459600|h', 'cs.d||#001eff|h', 'sig2t.d|||h', 'sig3b.d|||h', 'sig4t.d|||h', 'sig5b.d|||h',
   'sig6t.d|||h', 'sig7b.d|||h', 'ss.d|||h', 'bs.d|||h', 'bo.d|||h', 'drl.d||#f00|g', 'rout.d', 'bp.d', 'dd.d', 'tp.d', '1']
];
const marks = {
  h: '<svg viewBox="0 0 8 8"><path d="M0 4l3-1 2-3v3h3v1H6v2L4 8H1z"/></svg>',
  g: '<svg viewBox="0 0 8 8"><path d="M3 1h5v6H3zM5.5 1v6M3 4h5" fill="none" stroke="#000"/></svg>'
};

document.getElementById('layers').innerHTML = groups.map(g =>
  '<div class="group">' + g.map(row => {
    const [name, cls, color, mark] = row.split('|');
    const id = 'layer-' + name;
    return `<div class="layer"><input type="checkbox" id="${id}"${name === 'drl.d' ? ' checked' : ''}>` +
      `<span class="swatch" style="background:${color || '#000'}"></span>` +
      `<label class="${cls || ''}" for="${id}">${name}${marks[mark] || ''}</label></div>`;
  }).join('') + '</div>'
).join('');

// ---- board ----
let seed = 7;
function rnd() {
  seed = (seed * 16807) % 2147483647;
  return seed / 2147483647;
}

// x, y, columns, rows, pitch x, pitch y, pad width, pad height
const pads = [
  [160,72,1,1,0,0,19,26],[452,72,1,1,0,0,20,26],[562,72,1,1,0,0,21,26],[856,72,1,1,0,0,20,26],[963,72,1,1,0,0,21,26],[1257,72,1,1,0,0,22,26],
  [187,102,1,1,0,0,256,21],[590,102,1,1,0,0,255,21],[993,102,1,1,0,0,256,21],
  [1321,68,10,2,13,14,10,9],[1496,142,2,10,15,14,11,10],
  [181,155,2,5,26,28,14,14],[234,165,1,9,0,14,19,11],[45,286,1,4,0,28,16,16],[108,286,1,4,0,28,18,16],
  [186,298,1,5,0,12,20,10],[260,298,1,5,0,12,20,10],[158,305,2,5,10,13,8,10],[284,302,3,5,10,12,8,9],[194,363,2,2,12,14,9,12],
  [66,408,1,1,0,0,25,18],[165,408,1,1,0,0,18,18],[172,430,1,9,0,12,20,9],[206,418,2,8,12,16,9,11],[214,470,4,2,12,18,8,12],
  [64,585,1,1,0,0,27,17],[168,573,1,1,0,0,19,20],[320,450,2,2,13,14,10,12],[284,515,3,2,12,14,9,12],[354,556,3,2,13,14,10,11],
  [398,292,1,1,0,0,22,13],[426,304,1,1,0,0,42,16],[396,347,3,3,30,26,18,20],[484,347,1,3,0,26,16,22],[402,405,2,3,20,24,15,19],[448,405,3,2,16,26,12,20],[410,460,2,4,11,13,8,11],[470,460,2,4,11,13,8,11],[463,512,2,1,16,0,12,13],[495,489,1,3,0,14,14,12],
  [623,179,1,2,0,26,15,18],[644,176,4,1,19,0,14,16],[722,165,3,1,25,0,22,18],[642,201,4,1,19,0,15,17],[722,201,3,1,25,0,22,17],[626,228,2,2,18,20,14,15],[660,230,4,2,11,10,9,8],[801,205,2,2,22,26,17,16],[622,270,2,4,16,18,12,15],[654,265,2,1,20,0,16,15],[699,252,2,1,24,0,21,18],[645,289,3,1,20,0,16,17],[699,288,2,1,24,0,21,17],[752,265,2,1,20,0,16,14],[752,288,2,1,22,0,18,15],[660,320,6,2,11,11,9,10],
  [514,651,3,1,15,0,12,34],[542,628,1,2,0,20,9,15],[478,722,3,1,11,0,8,22],
  [869,488,5,1,12,0,9,12],[878,503,4,1,13,0,9,15],[872,562,4,2,11,11,9,9],[935,548,1,6,0,13,19,10],
  [1100,264,1,1,0,0,18,20],[1134,264,3,1,29,0,18,20],[1315,235,2,1,32,0,17,19],[1315,262,2,1,32,0,17,22],[1111,310,2,2,11,12,8,9],[1143,304,4,1,11,0,9,36],[1190,300,2,4,10,12,8,10],[1275,306,2,3,11,12,8,10],[1305,306,4,1,11,0,9,32],[1356,298,2,4,10,12,8,10],
  [1070,330,1,1,0,0,22,15],[1070,365,1,2,0,26,20,18],[1070,422,1,1,0,0,22,18],[1100,366,2,1,47,0,22,36],[1210,358,1,4,0,13,16,11],[1242,358,1,3,0,17,17,13],[1265,372,2,1,47,0,22,36],[1052,365,1,4,0,11,9,8],
  [1461,325,1,6,0,19,18,14],[1484,450,2,1,20,0,16,30],[1344,420,3,1,14,0,11,36],[1480,388,3,3,14,18,11,14],[1502,498,1,1,0,0,32,26],[1502,606,1,1,0,0,32,26],[1478,535,1,5,0,11,20,9],
  [1249,492,2,2,13,13,11,11],[1316,484,4,2,12,12,9,10],[1370,479,5,2,12,12,9,10],[1380,512,4,2,12,12,9,10],[1435,484,2,5,15,13,11,10],
  [1212,640,3,2,26,20,21,14],[1240,618,3,1,23,0,18,14],[1293,601,3,1,20,0,16,14],[1346,640,2,3,12,14,9,10],[1380,618,4,3,22,28,17,18],[1455,590,1,4,0,18,14,14],[1265,669,1,1,0,0,32,26],[1265,720,1,1,0,0,32,26],[1194,684,5,1,11,0,9,20],[1197,713,5,1,11,0,9,20],[1346,684,5,1,13,0,10,12],[1428,690,1,3,0,48,22,22],
  [1220,755,1,2,0,34,22,15],[1248,760,4,1,13,0,10,11],[1250,774,4,1,13,0,10,11],
  [1370,771,4,1,28,0,22,14],[1376,801,3,1,27,0,22,16],[1496,808,2,10,14,14,10,10],[1374,828,2,1,44,0,18,23],[1426,859,2,1,25,0,14,26],[1422,893,2,1,28,0,18,22],[1422,921,2,1,28,0,18,20],[1360,932,4,2,14,16,11,12],
  [168,633,11,1,12,0,8,20],[320,618,2,2,16,18,13,14],[197,673,8,1,8,0,6,10],[197,755,8,1,8,0,6,10],[188,688,1,7,0,9,10,7],[262,688,1,7,0,9,10,7],[208,698,4,5,11,9,9,7],[282,688,2,8,10,11,8,9],[308,680,3,1,16,0,12,12],[308,698,1,3,0,15,19,12],[336,708,1,3,0,30,18,14],
  [102,729,2,2,15,24,13,20],[138,740,3,3,10,10,8,8],[150,695,2,1,10,0,8,20],[171,793,2,2,10,10,8,8],[202,793,2,2,10,10,8,8],[232,793,2,2,10,10,8,8],[262,793,2,2,10,10,8,8],[308,757,3,2,14,14,11,11],
  [182,858,12,1,13,0,10,26],[182,957,12,1,13,0,10,23],[146,921,1,1,0,0,19,14],[146,954,1,1,0,0,19,16],[146,987,1,3,0,18,19,13],[124,962,1,5,0,15,13,11],
  [380,793,2,2,19,18,15,14],[420,816,1,1,0,0,18,14],[367,805,1,2,0,15,12,11],[366,840,1,1,0,0,32,24],[366,892,1,1,0,0,32,24],[450,870,1,1,0,0,52,46],[455,832,4,1,12,0,9,26],[455,924,4,1,12,0,9,26],[466,805,3,2,12,12,9,9],[360,918,3,3,15,16,11,13],[402,915,3,5,9,11,7,9],[445,957,3,1,12,0,9,20],[478,957,2,1,14,0,11,22],
  [538,732,3,14,9,10,7,8],[586,735,3,14,9,10,7,8],[745,732,3,14,9,10,7,8],[795,732,3,14,9,10,7,8],
  [632,842,4,8,9,11,7,9],[669,803,2,11,10,11,8,9],[690,772,3,9,11,11,8,9],
  [870,642,3,1,13,0,10,12],[870,655,2,2,28,22,15,18],[866,720,2,1,20,0,15,20],[866,818,2,2,20,28,15,20],
  [802,922,5,2,14,20,11,13],[918,920,1,1,0,0,23,18],[918,958,1,1,0,0,22,20],[918,985,1,1,0,0,22,16],[918,1017,1,1,0,0,22,18],
  [955,690,5,1,13,0,10,9],[1018,690,5,1,13,0,10,9],[1078,690,4,1,11,0,9,9],[936,702,1,4,0,14,9,9],[950,708,2,1,22,0,15,18],[962,732,1,1,0,0,15,20],[1000,702,2,1,24,0,16,22],[1024,732,1,1,0,0,15,20],[1062,702,2,1,24,0,16,20],[1090,732,1,1,0,0,15,20],
  [955,768,4,1,10,0,8,11],[1018,768,4,1,10,0,8,11],[1078,768,6,1,11,0,9,11],[936,782,1,4,0,13,9,9],[952,788,2,1,22,0,15,18],[962,814,1,1,0,0,15,20],[1003,786,2,1,24,0,15,18],[1026,814,1,1,0,0,15,18],[1066,786,2,1,24,0,15,18],[1090,814,1,1,0,0,15,18],
  [950,855,2,1,32,0,12,24],[1006,855,2,1,32,0,16,24],[1140,855,2,1,29,0,13,24],[1190,855,2,1,36,0,16,24],[960,900,2,3,9,12,7,10],[988,900,4,1,12,0,10,30],[1036,895,2,4,10,12,8,10],[950,960,2,1,46,0,22,36],[1146,900,2,3,11,12,8,9],[1178,904,4,1,11,0,9,24],[1228,895,2,4,10,12,8,10],[1177,972,2,1,47,0,22,36],[1255,936,1,3,0,26,20,16],[1280,955,1,5,0,14,10,11],[1255,1030,1,1,0,0,18,16],
  [366,1002,1,1,0,0,15,14],[412,1002,2,1,34,0,15,14],[491,1002,1,1,0,0,15,14],[366,1084,1,1,0,0,15,14],[414,1084,2,1,32,0,13,16],[491,1084,1,1,0,0,14,14],[554,992,3,1,11,0,8,20],[604,992,3,1,11,0,8,16],[546,1025,2,1,26,0,18,15],[598,1025,2,1,24,0,18,15],[513,1033,1,3,0,13,7,11],[555,1078,2,2,18,14,14,11],[591,1075,2,2,15,14,11,12],
  [679,985,3,3,14,16,11,13],[722,968,2,1,38,0,15,20],[722,1003,1,1,0,0,42,24],[780,968,1,1,0,0,15,20],[773,998,3,3,14,14,11,11],[727,1032,4,2,12,15,9,11],[790,1028,2,2,32,22,15,14],
  [1302,1025,2,2,14,14,11,12],[1340,1036,1,6,0,12,19,10],[1410,1036,1,6,0,12,20,10],[1364,1036,4,6,12,12,8,9],[1461,1062,1,1,0,0,19,110],[1483,1025,1,1,0,0,29,28],[1483,1182,1,1,0,0,29,27]
];

let copper = '', green = '';
for (const [x, y, c, r, px, py, w, h] of pads) {
  for (let i = 0; i < c; i++) {
    for (let j = 0; j < r; j++) {
      copper += `M${x + i * px} ${y + j * py}h${w}v${h}h${-w}z`;
      if (rnd() < 0.18 && w < 20) green += `M${x + i * px} ${y + j * py + h - 3}h${w}v3h${-w}z`;
    }
  }
}
// connector fingers
for (const [x, w] of [[187, 256], [590, 255], [993, 256]]) {
  for (let i = 12; i < w; i += 7) if (rnd() < 0.6) green += `M${x + i} 106h2v14h-2z`;
}
for (let y = 1070; y < 1170; y += 10) green += `M1461 ${y}h16v3h-16z`;
for (const x of [186, 260, 1340, 1410]) {
  for (let j = 0; j < 5; j++) green += `M${x + 2} ${(x < 300 ? 305 : 1042) + j * 12}h16v4h-16z`;
}

// BGA grid
let bga = '';
for (let i = 0; i < 22; i++) for (let j = 0; j < 22; j++) bga += `M${598 + i * 8} ${435 + j * 9}h6v6h-6z`;

// vias, kept off the trace bundles
let vias = '';
const via = (x, y) => { vias += `M${Math.round(x)} ${Math.round(y)}h6v6h-6z`; };
for (let i = 0; i < 560; i++) {
  const x = 50 + rnd() * 1470, y = 140 + rnd() * 900;
  if (x > 220 && x < 1240 && y < 600) continue;
  if (x > 880 && x < 890) continue;
  via(x, y);
}
for (let i = 0; i < 90; i++) via(250 + rnd() * 250, 340 + rnd() * 260);
for (let i = 0; i < 50; i++) via(900 + rnd() * 320, 420 + rnd() * 220);
for (let i = 0; i < 18; i++) via(640 + i * 9, rnd() < 0.5 ? 235 : 345);
for (let i = 0; i < 22; i++) via(640 + rnd() * 200, 165 + rnd() * 180);
for (let i = 0; i < 300; i++) via(602 + Math.floor(rnd() * 21) * 8, 439 + Math.floor(rnd() * 21) * 9);
for (let k = 0; k < 4; k++) for (let i = 0; i < 34; i++) via([538, 586, 745, 795][k] + Math.floor(rnd() * 3) * 9, 736 + Math.floor(rnd() * 14) * 10);
for (let i = 0; i < 26; i++) via(635 + rnd() * 85, 790 + rnd() * 120);
for (let i = 0; i < 13; i++) {
  for (let j = 0; j < 5; j++) via(300 + i * 90 + (j % 2) * 45, 1150 + j * 21 + (i % 3) * 2);
}
for (let x = 60; x < 1500; x += 60) via(x + rnd() * 20, 54);
for (const cx of [187, 590, 993]) for (let i = 0; i < 26; i++) if (rnd() < 0.7) via(cx + i * 10, rnd() < 0.4 ? 99 : 125);
for (let i = 0; i < 22; i++) via(515 + i * 14, 922);
for (let i = 0; i < 9; i++) via(835, 660 + i * 12);

// n lines interpolated between two polylines with the same number of points
function bundle(a, b, n) {
  let d = '';
  for (let k = 0; k <= n; k++) {
    const t = k / n;
    d += 'M' + a.map((p, i) => `${(p[0] + (b[i][0] - p[0]) * t).toFixed(1)} ${(p[1] + (b[i][1] - p[1]) * t).toFixed(1)}`).join('L');
  }
  return d;
}
const traces =
  bundle([[212,130],[292,194],[392,197],[516,324],[516,442],[558,486],[597,486]], [[280,130],[330,150],[420,155],[560,290],[560,400],[590,445],[597,445]], 9) +
  bundle([[505,200],[560,275],[570,300],[570,350],[605,395],[605,435]], [[512,140],[560,220],[612,300],[612,330],[640,375],[640,435]], 7) +
  bundle([[1238,130],[1138,230],[1098,234],[813,582],[775,582]], [[1090,130],[1050,175],[1010,200],[775,395],[775,445]], 20) +
  bundle([[870,300],[830,345],[735,350],[700,385],[700,435]], [[860,290],[810,312],[725,312],[650,375],[650,435]], 5);

// serpentine delay lines
let snake = '';
for (const [x0, x1, y0, y1, cut] of [[290, 400, 132, 150, 0], [408, 512, 132, 152, -0.8], [518, 612, 132, 200, -1.1], [858, 990, 132, 290, 1], [995, 1080, 132, 175, 0.3], [740, 850, 132, 158, 0]]) {
  for (let x = x0; x < x1; x += 12) {
    let d = `M${x} ${y0}`;
    for (let y = y0; y < y1 - (x - x0) * cut; y += 9) d += 'h8v4h-8v5';
    snake += d;
  }
}

const bigRings = [[300,344,17],[729,376,17],[705,671,17],[300,736,17],[811,736,17]];
const smallRings = [[457,338,11],[605,338,11],[299,528,11],[299,590,11],[299,693,11],[815,546,11],[365,741,11],[455,741,11],[554,741,11],[653,741,11],[750,741,11]];

const ring = ([x, y, r]) =>
  `<circle cx="${x}" cy="${y}" r="${r}" fill="#44b8ff"/><circle cx="${x}" cy="${y}" r="${r > 12 ? 10 : 6}" fill="#f00" stroke="${r > 12 ? '#c050f0' : '#0a1ea0'}"/>`;

document.getElementById('board').innerHTML = `
  <rect x="282.5" y="325.5" width="547" height="429" fill="#001eff" stroke="#9a4a30"/>
  <svg x="270" y="310" width="570" height="450" viewBox="0 0 1568 1350" preserveAspectRatio="none">
    <path d="M205 125H620V165L615 290L625 365H720L830 345L855 300V165L735 125H1245L1140 237H1100L815 590H775V435H830H597V492H552L508 448V328L388 203H288z"/>
    <path d="M545 375H620V435H597L560 420z M755 402H830L800 435H755z"/>
    <path d="${traces}" fill="none" stroke="#13239c" stroke-width="4"/>
    <path d="${snake}" fill="none" stroke="#13239c" stroke-width="3"/>
    <path d="M622 165H712V135H735V165H850V300L735 348H622z" fill="#001eff"/>
    <path d="M118 441h16v96h-16zM124 419h38v10h-38zM400 320h68v8h-68zM660 218h108v7h-108zM660 309h66v6h-66zM883 711h5v228h-5zM1375 789h134v9h-134zM1260 521L1320 525V600L1275 580L1260 550zM1461 340h26v16h-26zM176 655h122v8H176zM657 770L665 750H692L700 790H730V875H690V810H657zM630 842L650 825H670V925H632zM780 990h66v10h-20v35h-10v-35h-36zM110 330h18v26h-18zM172 320h16v30h-16zM280 308h14v40h-14zM1340 1036h95v64h-95zM185 680h15v14h-15z"/>
    <path d="M1535 300V404H1556V300z"/>
    <path d="M775 545H830L855 528H968L1055 630V760M775 555H835L860 536H963L1048 630V690M775 565H838L864 543H960L1040 625" fill="none" stroke="#020a60" stroke-width="4"/>
    <path d="M597 540H525L515 550L560 575H597M597 555H540M597 585H570" fill="none" stroke="#000" stroke-width="4"/>
    <path d="M198 1052L353 1225H1405L1460 1170M246 985V1063L310 1132M275 1060L387 1178M328 1080L398 1157" fill="none" stroke="#02084a" stroke-width="3"/>
    <path d="M408 515V593M180 812V838L194 852M215 824L240 850M240 822L268 850M285 829L320 850M447 875V940M1055 910V985M1141 655V780M994 940V993M968 1016H1028M688 1066H734M1125 424H1166M1265 445H1310M1335 203V260M1300 655V720M1362 907H1410M1312 49H1370M1405 49H1463M1358 455V525M1375 573H1480M1440 1060L1461 1090M1440 1072L1461 1100M1395 1155L1415 1135M1405 1180L1430 1150" fill="none" stroke="#02084a" stroke-width="3"/>
    <path d="${copper}" fill="#44b8ff"/>
    <path d="${green}" fill="#3c9678"/>
    <path d="M597 435h176v195h-176z" fill="#0a1cae"/>
    <path d="${bga}" fill="#58b0f8"/>
    <ellipse cx="348" cy="518" rx="24" ry="26" fill="#44b8ff"/>
    <path d="M1322 542h50v38h-50z" fill="#44b8ff"/>
    <path d="M208 698h40v42h-40zM1152 315h20v20h-20zM1318 315h20v18h-20zM1000 906h20v20h-20zM1188 906h20v20h-20z" fill="#8cc4ff"/>
    <path d="${vias}" fill="#d42ee6"/>
    <g fill="#000"><circle cx="708" cy="685" r="10"/><circle cx="685" cy="713" r="11"/></g>
    <g fill="#f0c"><circle cx="708" cy="685" r="4"/><circle cx="686" cy="709" r="5"/></g>
    <path d="M560 400h28v34h-28zM592 405h20v26h-20zM770 403h58l-28 30h-30z"/>
    <g fill="#bcc8f4"><path d="M567 408h15v17h-15zM788 408h15v17h-15zM567 648h15v18h-15zM788 648h15v18h-15zM597 413h7v9h-7zM740 653h7v9h-7zM69 446h11v11h-11zM69 536h11v10h-11z"/></g>
  </svg>
  ${bigRings.map(ring).join('')}
  ${smallRings.map(ring).join('')}
  <g fill="none" stroke="#fff">
    <rect x="814.5" y="409.5" width="21" height="35"/>
    <path d="M814 409L944 322M836 409L944 392M836 444L944 489M814 444L944 670"/>
    <path d="M272 755h20M282 745v20M275 748l14 14M289 748l-14 14"/>
    <circle cx="282" cy="755" r="6"/>
  </g>`;
```
